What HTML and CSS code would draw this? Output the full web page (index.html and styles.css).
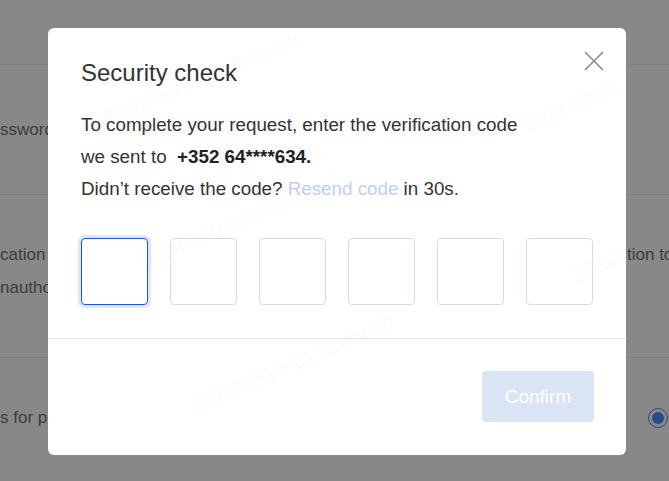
FILE: index.html
```html
<!DOCTYPE html>
<html>
  <head>
    <title>Security check</title>
    <link rel="stylesheet" href="styles.css">
  </head>
  <body>
    <div class="page">
      <div class="row row-top"></div>
      <div class="row row-pwd">
        <span class="bg-text">ssword</span>
      </div>
      <div class="row row-verify">
        <div class="bg-lines">
          <span class="bg-text">cation</span>
          <span class="bg-text">nautho</span>
        </div>
        <span class="bg-text bg-right">tion to</span>
      </div>
      <div class="row row-method">
        <span class="bg-text">s for p</span>
        <span class="radio"></span>
      </div>
    </div>

    <div class="modal">
      <span class="watermark wm-a">2024/09/19 14:18-zhoufr</span>
      <span class="watermark wm-b">2024/09/19 14:18-zhoufr</span>
      <span class="watermark wm-c">2024/09/19 14:18-zhoufr</span>
      <span class="watermark wm-d">2024/09/19</span>
      <span class="watermark wm-e">2024/09</span>

      <button class="close" type="button" aria-label="Close">
        <svg width="22" height="22" viewBox="0 0 22 22">
          <path d="M2 2 L20 20 M20 2 L2 20" stroke="#8c8c8c" stroke-width="1.6" fill="none" />
        </svg>
      </button>

      <div class="modal-body">
        <h2 class="title">Security check</h2>
        <p class="desc">
          To complete your request, enter the verification code<br />
          we sent to &nbsp;<b>+352 64****634.</b><br />
          Didn’t receive the code? <a class="resend" href="#">Resend code</a> in 30s.
        </p>
        <div class="code-row">
          <input class="code-box focused" type="text" maxlength="1" />
          <input class="code-box" type="text" maxlength="1" />
          <input class="code-box" type="text" maxlength="1" />
          <input class="code-box" type="text" maxlength="1" />
          <input class="code-box" type="text" maxlength="1" />
          <input class="code-box" type="text" maxlength="1" />
        </div>
      </div>

      <div class="modal-footer">
        <button class="confirm" type="button" disabled>Confirm</button>
      </div>
    </div>
  </body>
</html>
```

FILE: styles.css
```css
body {
  margin: 0;
  padding: 0;
  font-family: "Liberation Sans", Arial, sans-serif;
  background-color: #888888;
  overflow: hidden;
}

.page {
  width: 669px;
  height: 481px;
  color: #3c3c3c;
  font-size: 17px;
}

.row {
  display: flex;
  border-bottom: 1px solid #7e7e7e;
  box-sizing: border-box;
}

.row-top {
  height: 65px;
}

.row-pwd {
  height: 130px;
  align-items: center;
}

.row-verify {
  height: 163px;
  justify-content: space-between;
  padding-top: 48px;
  align-items: flex-start;
}

.bg-lines {
  display: flex;
  flex-direction: column;
  gap: 9px;
}

.row-method {
  border-bottom: none;
  justify-content: space-between;
  align-items: center;
  padding-top: 48px;
}

.bg-text {
  line-height: 24px;
}

.bg-right {
  padding-left: 627px;
  position: absolute;
  white-space: nowrap;
}

.radio {
  width: 18px;
  height: 18px;
  border: 1px solid #2b4a8a;
  border-radius: 50%;
  margin-right: 1px;
  display: flex;
  align-items: center;
  justify-content: center;
}

.radio::after {
  content: "";
  width: 12px;
  height: 12px;
  border-radius: 50%;
  background-color: #2b4a8a;
}

.modal {
  position: absolute;
  left: 48px;
  top: 28px;
  width: 578px;
  height: 427px;
  background-color: #fff;
  border-radius: 6px;
  overflow: hidden;
}

.watermark {
  position: absolute;
  font-size: 20px;
  color: rgba(0, 0, 0, 0.03);
  white-space: nowrap;
  transform: rotate(-23deg);
  transform-origin: left bottom;
  pointer-events: none;
}

.wm-a { left: 55px; top: 82px; }
.wm-b { left: 100px; top: 222px; }
.wm-c { left: 150px; top: 366px; }
.wm-d { left: 482px; top: 86px; }
.wm-e { left: 532px; top: 236px; }

.close {
  position: absolute;
  right: 21px;
  top: 22px;
  padding: 0;
  border: none;
  background: none;
  cursor: pointer;
}

.modal-body {
  padding: 29px 33px 33px;
  border-bottom: 1px solid #e6e6e6;
}

.title {
  margin: 0 0 20px;
  font-size: 24px;
  font-weight: normal;
  line-height: 32px;
  color: #333;
}

.desc {
  margin: 0 0 33px;
  font-size: 18.8px;
  line-height: 32px;
  color: #333;
}

.desc b {
  color: #222;
}

.resend {
  color: #bfd0f0;
  text-decoration: none;
}

.code-row {
  display: flex;
  justify-content: space-between;
}

.code-box {
  width: 67px;
  height: 67px;
  box-sizing: border-box;
  border: 1px solid #d6dbe6;
  border-radius: 4px;
  padding: 0;
  font-size: 24px;
  text-align: center;
  outline: none;
}

.code-box.focused {
  border-color: #1a55d9;
  box-shadow: 0 0 0 3px #dde7fb;
}

.modal-footer {
  display: flex;
  justify-content: flex-end;
  padding: 32px 32px;
}

.confirm {
  width: 112px;
  height: 51px;
  border: none;
  border-radius: 4px;
  background-color: #d9e4f5;
  color: #fff;
  font-family: "Liberation Sans", Arial, sans-serif;
  font-size: 19px;
}
```
